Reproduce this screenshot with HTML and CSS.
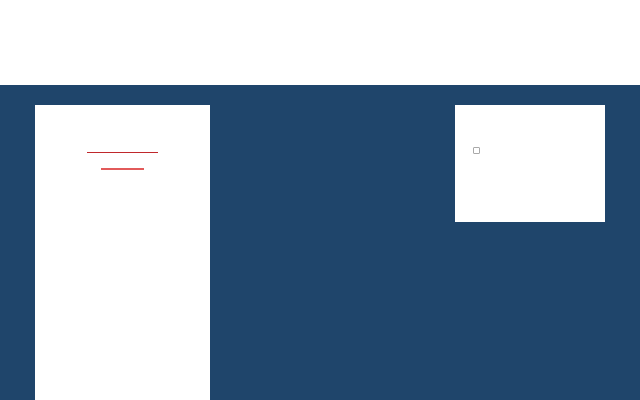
FILE: index.html
```html
<!DOCTYPE html>
<html>
<head>
<meta charset="utf-8">
<link rel="stylesheet" href="styles.css">
</head>
<body>
<header class="top"></header>
<main class="stage">
  <section class="panel panel-left">
    <div class="rule rule-long"></div>
    <div class="rule rule-short"></div>
  </section>
  <section class="panel panel-right">
    <span class="check"></span>
  </section>
</main>
</body>
</html>
```
FILE: styles.css
```css
html, body {
  margin: 0;
  padding: 0;
  font-family: "Liberation Sans", Arial, sans-serif;
  background: #ffffff;
  overflow: hidden;
}
.top {
  height: 85px;
  background: #ffffff;
}
.stage {
  height: 315px;
  background: #1f456b;
  box-sizing: border-box;
  padding: 20px 35px 0 35px;
  display: flex;
  justify-content: space-between;
  align-items: flex-start;
}
.panel {
  background: #ffffff;
}
.panel-left {
  width: 175px;
  height: 295px;
  display: flex;
  flex-direction: column;
  align-items: center;
  padding-top: 47px;
  box-sizing: border-box;
}
.rule {
  background: #d62a2a;
}
.rule-long {
  width: 71px;
  height: 1px;
  background: #c0282c;
}
.rule-short {
  width: 43px;
  height: 2px;
  margin-top: 15px;
  background: #e25a5a;
}
.panel-right {
  width: 150px;
  height: 117px;
  box-sizing: border-box;
  padding: 42px 0 0 18px;
}
.check {
  display: block;
  width: 5px;
  height: 5px;
  border: 1px solid #a9a9a9;
  border-radius: 1px;
}
```
